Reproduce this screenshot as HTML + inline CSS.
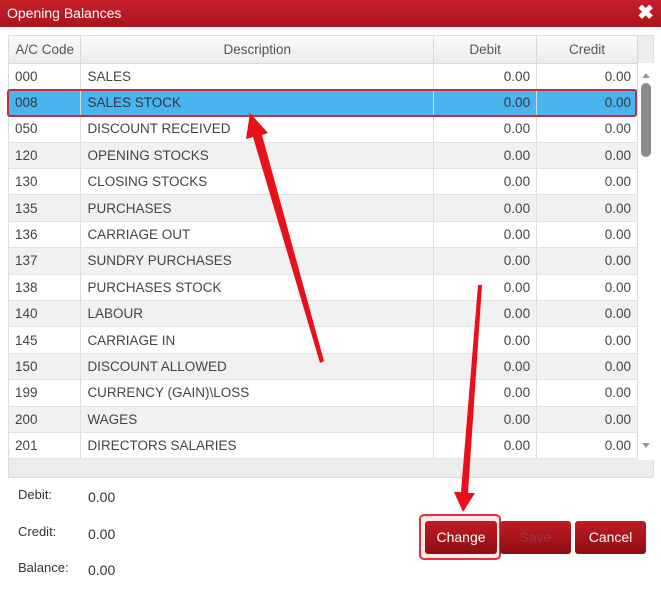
<!DOCTYPE html>
<html><head><style>
*{margin:0;padding:0;box-sizing:border-box}
body{width:661px;height:601px;background:#fff;font-family:"Liberation Sans",sans-serif;position:relative;overflow:hidden;color:#444}
.title{position:absolute;left:0;top:0;width:661px;height:27px;background:linear-gradient(#c8202a,#a9141d);color:#fff;font-size:14px;line-height:27px;padding-left:7px}
.x{position:absolute;right:7px;top:3px;color:#fff;font-size:20px;font-weight:bold;line-height:20px}
.grid{position:absolute;left:8px;top:35px;width:646px;height:443px;background:#ececec;border:1px solid #ddd}
table{border-collapse:collapse;position:absolute;left:0;top:0;width:629px;font-size:13.5px}
td{height:26.4px;border-right:1px solid #ddd;border-bottom:1px solid #e2e2e2;padding:0 6px;white-space:nowrap}
th{height:27px;font-weight:normal;background:linear-gradient(#fafafa,#ececec);border-right:1px solid #d8d8d8;border-bottom:1px solid #d8d8d8;color:#555}
tr.w td{background:#fff}tr.g td{background:#f1f1f1}
tr.s td{background:#4ab4ee;color:#334}
.r{text-align:right}
.sb{position:absolute;left:629px;top:27px;width:16px;height:397px;background:#fff}
.label{position:absolute;font-size:13px;color:#333}
.btn{position:absolute;top:521px;height:33px;background:linear-gradient(#c11c24,#8e0d14);color:#fff;font-size:14px;text-align:center;line-height:33px;border-radius:3px}
</style></head><body>
<div class="title">Opening Balances<span class="x">✖</span></div>
<div class="grid">
<table>
<tr><th style="width:72px">A/C Code</th><th style="width:353px">Description</th><th style="width:103px">Debit</th><th style="width:101px">Credit</th></tr>
<tr class="w"><td>000</td><td>SALES</td><td class="r">0.00</td><td class="r">0.00</td></tr>
<tr class="s"><td>008</td><td>SALES STOCK</td><td class="r">0.00</td><td class="r">0.00</td></tr>
<tr class="w"><td>050</td><td>DISCOUNT RECEIVED</td><td class="r">0.00</td><td class="r">0.00</td></tr>
<tr class="g"><td>120</td><td>OPENING STOCKS</td><td class="r">0.00</td><td class="r">0.00</td></tr>
<tr class="w"><td>130</td><td>CLOSING STOCKS</td><td class="r">0.00</td><td class="r">0.00</td></tr>
<tr class="g"><td>135</td><td>PURCHASES</td><td class="r">0.00</td><td class="r">0.00</td></tr>
<tr class="w"><td>136</td><td>CARRIAGE OUT</td><td class="r">0.00</td><td class="r">0.00</td></tr>
<tr class="g"><td>137</td><td>SUNDRY PURCHASES</td><td class="r">0.00</td><td class="r">0.00</td></tr>
<tr class="w"><td>138</td><td>PURCHASES STOCK</td><td class="r">0.00</td><td class="r">0.00</td></tr>
<tr class="g"><td>140</td><td>LABOUR</td><td class="r">0.00</td><td class="r">0.00</td></tr>
<tr class="w"><td>145</td><td>CARRIAGE IN</td><td class="r">0.00</td><td class="r">0.00</td></tr>
<tr class="g"><td>150</td><td>DISCOUNT ALLOWED</td><td class="r">0.00</td><td class="r">0.00</td></tr>
<tr class="w"><td>199</td><td>CURRENCY (GAIN)\LOSS</td><td class="r">0.00</td><td class="r">0.00</td></tr>
<tr class="g"><td>200</td><td>WAGES</td><td class="r">0.00</td><td class="r">0.00</td></tr>
<tr class="w"><td>201</td><td>DIRECTORS SALARIES</td><td class="r">0.00</td><td class="r">0.00</td></tr>
</table>
<div class="sb">
<div style="position:absolute;left:4px;top:10px;border:4px solid transparent;border-bottom:5px solid #999;border-top:0"></div>
<div style="position:absolute;left:3px;top:20px;width:10px;height:74px;background:#8c8c8c;border-radius:5px"></div>
<div style="position:absolute;left:4px;top:380px;border:4px solid transparent;border-top:5px solid #999;border-bottom:0"></div>
</div>
</div>
<div style="position:absolute;left:7px;top:89px;width:630px;height:28px;border:2px solid #c0303a;border-radius:3px"></div>
<div class="label" style="left:18px;top:487px">Debit:</div><div class="label" style="left:88px;top:489px;font-size:14px">0.00</div>
<div class="label" style="left:18px;top:524px">Credit:</div><div class="label" style="left:88px;top:526px;font-size:14px">0.00</div>
<div class="label" style="left:18px;top:560px">Balance:</div><div class="label" style="left:88px;top:562px;font-size:14px">0.00</div>
<div style="position:absolute;left:419px;top:514px;width:82px;height:46px;border:2px solid #e0303a;border-radius:5px;background:#fde8e8"></div>
<div class="btn" style="left:425px;width:72px">Change</div>
<div class="btn" style="left:500px;width:71px;color:#9a3a40">Save</div>
<div class="btn" style="left:575px;width:71px">Cancel</div>
<svg width="661" height="601" style="position:absolute;left:0;top:0">
<polygon points="320,363 324,361 262,135 268,133 250,113 246,139 253,137" fill="#e8101a"/>
<polygon points="478,285 482,285 468,493 475,493 463,512 454,492 461,492" fill="#e8101a"/>
</svg>
</body></html>
